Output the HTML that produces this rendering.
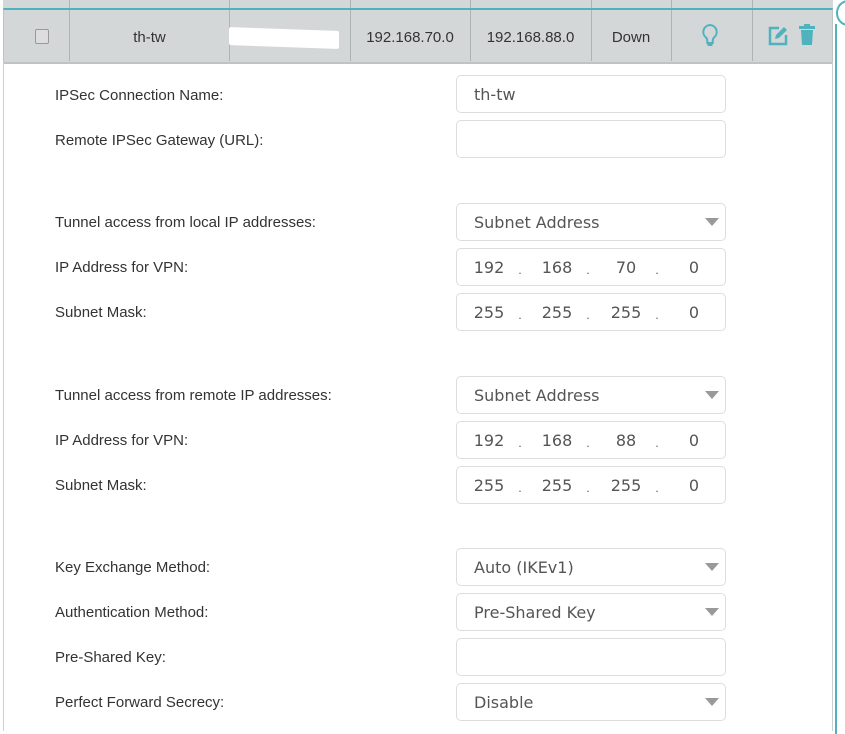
<!DOCTYPE html>
<html><head><style>
body{margin:0;width:845px;height:731px;overflow:hidden;background:#fff;font-family:"Liberation Sans",sans-serif;position:relative}
.top{position:absolute;left:3px;top:0;width:830px;height:8px;background:#d4d7d8}
.row{position:absolute;left:3px;top:8px;width:828px;height:52px;background:#d4d7d8;border-top:2px solid #4fb2bd;border-left:1px solid #c0c3c4;border-right:1px solid #c0c3c4;border-bottom:2px solid #c0c3c4}
.vl{position:absolute;top:0;width:1px;height:62px;background:#b0b3b4}
.cell{position:absolute;top:22px;height:52px;line-height:32px;text-align:center;font-size:15px;color:#333}
.panel{position:absolute;left:3px;top:62px;width:828px;height:669px;border-left:1px solid #c9d1d3;border-right:1px solid #c9d1d3}
.lab{position:absolute;left:55px;font-size:15px;color:#333}
.in{position:absolute;left:456px;width:270px;height:38px;border:1px solid #ddd;border-radius:5px;box-sizing:border-box;font-family:"DejaVu Sans",sans-serif;font-size:16px;color:#555;line-height:38px;padding-left:17px}
.arr{position:absolute;right:6px;top:14px;width:0;height:0;border-left:7px solid transparent;border-right:7px solid transparent;border-top:8px solid #999}
.ip span{position:absolute;width:40px;text-align:center;top:0}
.ip span.d{font-size:11px;top:3px}
</style></head><body>
<div class="top"></div>
<div class="vl" style="left:69px"></div><div class="vl" style="left:229px"></div><div class="vl" style="left:350px"></div><div class="vl" style="left:470px"></div><div class="vl" style="left:591px"></div><div class="vl" style="left:671px"></div><div class="vl" style="left:752px"></div>
<div class="row"></div>
<div class="vl" style="left:69px;top:10px;height:51px"></div><div class="vl" style="left:229px;top:10px;height:51px"></div><div class="vl" style="left:350px;top:10px;height:51px"></div><div class="vl" style="left:470px;top:10px;height:51px"></div><div class="vl" style="left:591px;top:10px;height:51px"></div><div class="vl" style="left:671px;top:10px;height:51px"></div><div class="vl" style="left:752px;top:10px;height:51px"></div>
<div style="position:absolute;left:35px;top:29px;width:12px;height:13px;border:1.5px solid #999;border-radius:2px;background:#ddd"></div>
<div class="cell" style="left:70px;width:159px">th-tw</div>
<div style="position:absolute;left:229px;top:29px;width:110px;height:18px;background:#fff;border-radius:2px;transform:skewY(2deg)"></div>
<div class="cell" style="left:350px;width:120px">192.168.70.0</div>
<div class="cell" style="left:470px;width:121px">192.168.88.0</div>
<div class="cell" style="left:591px;width:80px">Down</div>
<svg style="position:absolute;left:700px;top:23px" width="20" height="26" viewBox="0 0 20 26"><path d="M10 2a7 7 0 0 0-4 12.5c1 1 1.3 2 1.3 3.5v2h5.4v-2c0-1.5.3-2.5 1.3-3.5A7 7 0 0 0 10 2z" fill="none" stroke="#4fb2bd" stroke-width="2"/><path d="M7.5 22h5" stroke="#4fb2bd" stroke-width="2"/></svg>
<svg style="position:absolute;left:767px;top:25px" width="22" height="22" viewBox="0 0 22 22"><path d="M12 3H3v16h16v-9" fill="none" stroke="#4fb2bd" stroke-width="2.5"/><path d="M8 14l1-4 8-8 3 3-8 8z" fill="#4fb2bd"/></svg>
<svg style="position:absolute;left:798px;top:24px" width="18" height="22" viewBox="0 0 18 22"><rect x="1" y="2" width="16" height="3" fill="#4fb2bd"/><rect x="6" y="0" width="6" height="3" fill="#4fb2bd"/><path d="M3 6h12l-1 15H4z" fill="#4fb2bd"/></svg>
<div style="position:absolute;left:836px;top:0;width:20px;height:22px;border:2px solid #4fb2bd;border-radius:50%"></div>
<div style="position:absolute;left:835px;top:24px;width:2px;height:710px;background:#4fb2bd"></div>
<div class="panel"></div>

<div class="lab" style="top:87px">IPSec Connection Name:</div>
<div class="in" style="top:75px">th-tw</div>
<div class="lab" style="top:132px">Remote IPSec Gateway (URL):</div>
<div class="in" style="top:120px"></div>

<div class="lab" style="top:214px">Tunnel access from local IP addresses:</div>
<div class="in" style="top:203px">Subnet Address<div class="arr"></div></div>
<div class="lab" style="top:259px">IP Address for VPN:</div>
<div class="in ip" style="top:248px"><span style="left:12px">192</span><span class="d" style="left:43px">.</span><span style="left:80px">168</span><span class="d" style="left:111px">.</span><span style="left:149px">70</span><span class="d" style="left:180px">.</span><span style="left:217px">0</span></div>
<div class="lab" style="top:304px">Subnet Mask:</div>
<div class="in ip" style="top:293px"><span style="left:12px">255</span><span class="d" style="left:43px">.</span><span style="left:80px">255</span><span class="d" style="left:111px">.</span><span style="left:149px">255</span><span class="d" style="left:180px">.</span><span style="left:217px">0</span></div>

<div class="lab" style="top:387px">Tunnel access from remote IP addresses:</div>
<div class="in" style="top:376px">Subnet Address<div class="arr"></div></div>
<div class="lab" style="top:432px">IP Address for VPN:</div>
<div class="in ip" style="top:421px"><span style="left:12px">192</span><span class="d" style="left:43px">.</span><span style="left:80px">168</span><span class="d" style="left:111px">.</span><span style="left:149px">88</span><span class="d" style="left:180px">.</span><span style="left:217px">0</span></div>
<div class="lab" style="top:477px">Subnet Mask:</div>
<div class="in ip" style="top:466px"><span style="left:12px">255</span><span class="d" style="left:43px">.</span><span style="left:80px">255</span><span class="d" style="left:111px">.</span><span style="left:149px">255</span><span class="d" style="left:180px">.</span><span style="left:217px">0</span></div>

<div class="lab" style="top:559px">Key Exchange Method:</div>
<div class="in" style="top:548px">Auto (IKEv1)<div class="arr"></div></div>
<div class="lab" style="top:604px">Authentication Method:</div>
<div class="in" style="top:593px">Pre-Shared Key<div class="arr"></div></div>
<div class="lab" style="top:649px">Pre-Shared Key:</div>
<div class="in" style="top:638px"></div>
<div class="lab" style="top:694px">Perfect Forward Secrecy:</div>
<div class="in" style="top:683px">Disable<div class="arr"></div></div>
</body></html>
